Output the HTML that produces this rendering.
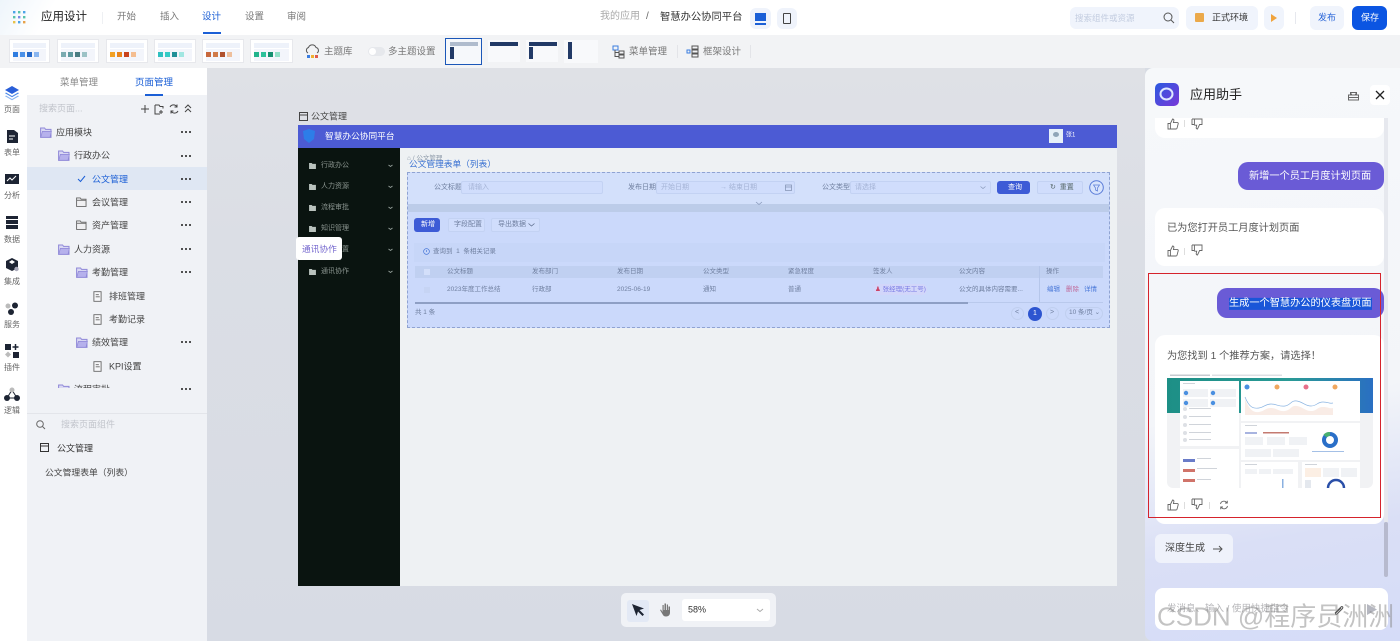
<!DOCTYPE html>
<html lang="zh"><head><meta charset="utf-8"><title>应用设计</title>
<style>
*{box-sizing:border-box}
html{background:#fff}
html,body{margin:0;padding:0}
body{width:1400px;height:641px;overflow:hidden;position:relative;background:#d8dce4;font-family:"Liberation Sans","Noto Sans CJK SC",sans-serif;color:#333;filter:blur(.35px)}
.t{position:absolute;white-space:nowrap;line-height:1.2;transform:translateY(-50%)}
.b{position:absolute}
svg{position:absolute;overflow:visible}
.c{transform:translate(-50%,-50%);text-align:center}
.tree{font-size:9px;color:#444}
.dots{position:absolute;left:181px;width:10px;height:2px;background:radial-gradient(circle at 1px 1px,#333 1px,transparent 1.1px) 0 0/4px 2px repeat-x}
.rail{font-size:8px;color:#666}
.card{position:absolute;top:39px;height:24px;background:#fff;border:1px solid #e7e8ec}
.card i{position:absolute;top:12px;width:5px;height:5px}
.card b{position:absolute;left:3px;right:3px;top:3px;height:5px;background:#eef2fa}
.card u{position:absolute;left:3px;right:3px;top:9px;height:12px;background:#f3f5fb;z-index:0}
.card i{z-index:1}
.menu{font-size:7px;color:#8a948f}
.f7{font-size:7px;color:#6f7f9f}
.ph{font-size:7px;color:#a5b4d6}
.box{position:absolute;border:1px solid #c3d2f3;background:#d0ddfc;border-radius:2px}
.bub{position:absolute;background:#6a5bd6;border-radius:10px}
.w{position:absolute;background:#fff;border-radius:10px}
.ms{font-size:10.2px;color:#555}
</style></head><body>

<svg width="0" height="0" style="position:absolute">
<defs>
<symbol id="fp" viewBox="0 0 12 11"><path d="M.6 1h4l1 1.4h5.4v8H.6z" fill="#d9d8f3" stroke="#8f88d8"/><path d="M.8 10.2 2.4 4.4h9L10 10.2z" fill="#b6b1ec" stroke="#8f88d8" stroke-width=".7"/></symbol>
<symbol id="fg" viewBox="0 0 12 11"><path d="M.6 1h4l1 1.4h5.4v8H.6z" fill="#f0f0f2" stroke="#666"/><path d="M.6 3.6h10.8" stroke="#666"/></symbol>
<symbol id="doc" viewBox="0 0 10 12"><path d="M1 .6h8v10.8H1z" fill="#f6f7f9" stroke="#666"/><path d="M3 4h3.5M3 6.3h4.5" stroke="#666"/></symbol>
<symbol id="up" viewBox="0 0 12 12"><path d="M1 5.5h2.4V11H1zM3.4 5.5 5.6 1c1.2 0 1.5 1 1.2 2L6.4 4.6H10.400c.7 0 1 .6.8 1.200L10 10.300c-.1.500-.5.700-1 .700H3.400" fill="none" stroke="#666" stroke-width=".9"/></symbol>
<symbol id="down" viewBox="0 0 12 12"><path d="M1 1h10v5.500H8.600L6.500 11c-1.200 0-1.500-1-1.200-2l.4-1.800H3.400" fill="none" stroke="#666" stroke-width=".9"/><path d="M3.400 1v6.200M1 1v5.500h2.400" fill="none" stroke="#666" stroke-width=".9"/></symbol>
<symbol id="fold" viewBox="0 0 8 7"><path d="M0 0h3l1 1h4v6H0z" fill="#b9c2bd"/></symbol>
</defs></svg>

<!-- top bar -->
<div class="b" style="left:0;top:0;width:1400px;height:35px;background:#fff"></div>
<div class="b" style="left:0;top:0;width:60px;height:35px;background:linear-gradient(120deg,#eef5fb,#fff 70%)"></div>
<svg style="left:13px;top:11px" width="14" height="14"><g fill="#4aa3e8"><rect x="0" y="0" width="2.400" height="2.400"/><rect x="5" y="0" width="2.400" height="2.400" fill="#58c2a8"/><rect x="10" y="0" width="2.400" height="2.400" fill="#4aa3e8"/><rect x="0" y="5" width="2.400" height="2.400" fill="#58c2a8"/><rect x="5" y="5" width="2.400" height="2.400" fill="#7a8be8"/><rect x="10" y="5" width="2.400" height="2.400" fill="#58c2a8"/><rect x="0" y="10" width="2.400" height="2.400" fill="#e8c24a"/><rect x="5" y="10" width="2.400" height="2.400" fill="#4aa3e8"/><rect x="10" y="10" width="2.400" height="2.400" fill="#e8a24a"/></g></svg>
<div class="t" style="left:41px;top:18px;font-size:11.500px;color:#222">应用设计</div>
<div class="b" style="left:102px;top:12px;width:1px;height:12px;background:#eef0f3"></div>
<div class="t" style="left:117px;top:17px;font-size:9.500px;color:#777">开始</div>
<div class="t" style="left:160px;top:17px;font-size:9.500px;color:#777">插入</div>
<div class="t" style="left:202px;top:17px;font-size:9.500px;color:#1b5fd6">设计</div>
<div class="t" style="left:245px;top:17px;font-size:9.500px;color:#777">设置</div>
<div class="t" style="left:287px;top:17px;font-size:9.500px;color:#777">审阅</div>
<div class="b" style="left:203px;top:32px;width:18px;height:2px;background:#1b5fd6"></div>
<div class="t" style="left:600px;top:17px;font-size:10px;color:#aaa">我的应用</div>
<div class="t" style="left:646px;top:17px;font-size:10px;color:#666">/</div>
<div class="t" style="left:660px;top:18px;font-size:10.300px;color:#333">智慧办公协同平台</div>
<div class="b" style="left:750px;top:8px;width:21px;height:21px;background:#eff3fb;border-radius:6px"></div>
<div class="b" style="left:755px;top:13px;width:11px;height:8px;background:#1b5fd6;border:1px solid #1b5fd6"></div>
<div class="b" style="left:755px;top:23px;width:11px;height:1.500px;background:#1b5fd6"></div>
<div class="b" style="left:777px;top:8px;width:20px;height:21px;background:#eff3fb;border-radius:6px"></div>
<div class="b" style="left:783px;top:13px;width:8px;height:11px;border:1px solid #444;border-radius:1px"></div>
<div class="b" style="left:1070px;top:7px;width:109px;height:22px;background:#f0f4fc;border-radius:6px"></div>
<div class="t" style="left:1075px;top:18px;font-size:8.500px;color:#c3cde0">搜索组件或资源</div>
<svg style="left:1163px;top:12px" width="12" height="12" fill="none" stroke="#555"><circle cx="5" cy="5" r="4"/><path d="M8 8l3 3"/></svg>
<div class="b" style="left:1186px;top:6px;width:72px;height:24px;background:#f0f4fc;border-radius:6px"></div>
<div class="b" style="left:1195px;top:13px;width:9px;height:9px;background:#eba94a;border-radius:1px"></div>
<div class="t" style="left:1212px;top:18px;font-size:9px;color:#333">正式环境</div>
<div class="b" style="left:1264px;top:6px;width:20px;height:24px;background:#f0f4fc;border-radius:6px"></div>
<svg style="left:1271px;top:14px" width="8" height="9"><path d="M0 0l6 4-6 4z" fill="#f0a33c"/></svg>
<div class="b" style="left:1295px;top:12px;width:1px;height:12px;background:#e6e8ee"></div>
<div class="b" style="left:1310px;top:6px;width:34px;height:24px;background:#f0f4fc;border-radius:6px"></div>
<div class="t" style="left:1318px;top:18px;font-size:9px;color:#2a66d8">发布</div>
<div class="b" style="left:1352px;top:6px;width:35px;height:24px;background:#0b55e2;border-radius:6px"></div>
<div class="t" style="left:1361px;top:18px;font-size:9px;color:#fff">保存</div>

<!-- toolbar -->
<div class="b" style="left:0;top:35px;width:1400px;height:33px;background:#f2f3f5"></div>
<div class="card" style="left:9px;width:41px"><b></b><u></u><i style="left:3px;background:#2f7de0"></i><i style="left:10px;background:#4a90e8"></i><i style="left:17px;background:#2467c8"></i><i style="left:24px;background:#8ab6f0"></i></div>
<div class="card" style="left:57px;width:42px"><b></b><u></u><i style="left:3px;background:#7aaab0"></i><i style="left:10px;background:#5f9aa0"></i><i style="left:17px;background:#4a7c82"></i><i style="left:24px;background:#9cc2c6"></i></div>
<div class="card" style="left:106px;width:42px"><b></b><u></u><i style="left:3px;background:#f2a024"></i><i style="left:10px;background:#e8841c"></i><i style="left:17px;background:#c9421c"></i><i style="left:24px;background:#f4bd90"></i></div>
<div class="card" style="left:154px;width:42px"><b></b><u></u><i style="left:3px;background:#2fc0c0"></i><i style="left:10px;background:#35cbc6"></i><i style="left:17px;background:#1f8f98"></i><i style="left:24px;background:#a0e6e2"></i></div>
<div class="card" style="left:202px;width:42px"><b></b><u></u><i style="left:3px;background:#c8683c"></i><i style="left:10px;background:#d07a48"></i><i style="left:17px;background:#b0502c"></i><i style="left:24px;background:#eebf9c"></i></div>
<div class="card" style="left:250px;width:43px"><b></b><u></u><i style="left:3px;background:#22b48c"></i><i style="left:10px;background:#2cc09a"></i><i style="left:17px;background:#159070"></i><i style="left:24px;background:#92e0c8"></i></div>
<svg style="left:305px;top:45px" width="15" height="15" fill="none"><path d="M3 8a3 3 0 0 1 .5-5.500A4 4 0 0 1 11 2.500 3 3 0 0 1 12 8" stroke="#555"/><rect x="2" y="10" width="3" height="3" fill="#3a7de0"/><rect x="6" y="10" width="3" height="3" fill="#f0b030"/><rect x="10" y="10" width="3" height="3" fill="#e05a4a"/></svg>
<div class="t" style="left:324px;top:52px;font-size:9.500px;color:#777">主题库</div>
<div class="b" style="left:368px;top:47px;width:17px;height:9px;background:#e6e8ec;border-radius:5px"></div>
<div class="b" style="left:369px;top:48px;width:7px;height:7px;background:#fff;border-radius:50%"></div>
<div class="t" style="left:388px;top:52px;font-size:9.500px;color:#777">多主题设置</div>
<div class="b" style="left:445px;top:38px;width:37px;height:27px;border:1.500px solid #1b57b8;background:#f6f8fb"></div>
<div class="b" style="left:450px;top:42px;width:28px;height:4px;background:#b0bccd"></div>
<div class="b" style="left:450px;top:47px;width:4px;height:12px;background:#223a66"></div>
<div class="b" style="left:488px;top:40px;width:32px;height:22px;background:#f8f9fb"></div>
<div class="b" style="left:490px;top:42px;width:28px;height:4px;background:#223a66"></div>
<div class="b" style="left:526px;top:40px;width:32px;height:22px;background:#f8f9fb"></div>
<div class="b" style="left:529px;top:42px;width:28px;height:4px;background:#223a66"></div>
<div class="b" style="left:529px;top:47px;width:4px;height:12px;background:#223a66"></div>
<div class="b" style="left:564px;top:40px;width:34px;height:23px;background:#f8f9fb"></div>
<div class="b" style="left:568px;top:42px;width:4px;height:17px;background:#223a66"></div>
<svg style="left:612px;top:45px" width="14" height="14" fill="none" stroke="#555"><rect x="1" y="1" width="5" height="4" stroke="#3a7de0"/><rect x="7" y="6" width="5" height="3"/><rect x="7" y="10" width="5" height="3"/><path d="M3 5v6.500h4M3 7.500h4"/></svg>
<div class="t" style="left:629px;top:52px;font-size:9.500px;color:#777">菜单管理</div>
<div class="b" style="left:677px;top:45px;width:1px;height:13px;background:#e3e4e8"></div>
<svg style="left:686px;top:45px" width="13" height="13" fill="none" stroke="#555"><rect x="6" y="1" width="6" height="3"/><rect x="6" y="5" width="6" height="3"/><rect x="6" y="9" width="6" height="3"/><rect x="1" y="5" width="3" height="3" stroke="#3a7de0"/></svg>
<div class="t" style="left:703px;top:52px;font-size:9.500px;color:#777">框架设计</div>
<div class="b" style="left:750px;top:45px;width:1px;height:13px;background:#e3e4e8"></div>

<!-- rail -->
<div class="b" style="left:0;top:68px;width:27px;height:573px;background:#fff"></div>
<svg style="left:5px;top:86px" width="14" height="14"><path d="M7 0l7 4-7 4-7-4z" fill="#2a5fd8"/><path d="M1 6.500l6 3.500 6-3.500 1 .8-7 4-7-4z" fill="#4a86e8"/><path d="M1 9.500l6 3.500 6-3.500 1 .8-7 4-7-4z" fill="#8ab4f0"/></svg>
<div class="t rail c" style="left:12px;top:110px">页面</div>
<svg style="left:7px;top:130px" width="11" height="13"><path d="M0 0h7l4 3v10H0z" fill="#1d2433"/><path d="M2 6h6M2 9h4" stroke="#fff"/></svg>
<div class="t rail c" style="left:12px;top:153px">表单</div>
<svg style="left:5px;top:174px" width="14" height="10"><rect width="14" height="10" fill="#1d2433"/><path d="M2 7l3-3 2 2 4-4" stroke="#fff" fill="none"/></svg>
<div class="t rail c" style="left:12px;top:196px">分析</div>
<svg style="left:6px;top:216px" width="12" height="13"><rect width="12" height="3" fill="#1d2433"/><rect y="4" width="12" height="4" fill="#1d2433"/><rect y="9" width="12" height="4" fill="#1d2433"/></svg>
<div class="t rail c" style="left:12px;top:240px">数据</div>
<svg style="left:6px;top:258px" width="13" height="14"><path d="M6 0l6 3v7l-6 3-6-3V3z" fill="#1d2433"/><path d="M3 4l3-2 3 2-3 2z" fill="#fff"/><circle cx="10.500" cy="11" r="2.200" fill="#aab"/></svg>
<div class="t rail c" style="left:12px;top:282px">集成</div>
<svg style="left:5px;top:302px" width="14" height="14"><circle cx="3" cy="4" r="2.500" fill="#bbb"/><circle cx="10" cy="3.500" r="3" fill="#1d2433"/><circle cx="6" cy="10" r="3" fill="#1d2433"/></svg>
<div class="t rail c" style="left:12px;top:325px">服务</div>
<svg style="left:5px;top:344px" width="14" height="14"><rect width="6" height="6" fill="#1d2433"/><path d="M10.500 0v6M7.500 3h6" stroke="#1d2433" stroke-width="1.500"/><path d="M3 7.500l3 3-3 3-3-3z" fill="#bbb"/><rect x="8" y="8" width="6" height="6" fill="#1d2433"/></svg>
<div class="t rail c" style="left:12px;top:368px">插件</div>
<svg style="left:4px;top:387px" width="16" height="14"><path d="M8 3l5 8H3z" fill="none" stroke="#1d2433"/><circle cx="8" cy="3" r="2.500" fill="#bbb"/><circle cx="3" cy="11" r="3" fill="#1d2433"/><circle cx="13" cy="11" r="3" fill="#1d2433"/></svg>
<div class="t rail c" style="left:12px;top:411px">逻辑</div>

<!-- left panel -->
<div class="b" style="left:27px;top:68px;width:180px;height:573px;background:#f0f2f6"></div>
<div class="b" style="left:27px;top:68px;width:180px;height:27px;background:#fff"></div>
<div class="t" style="left:60px;top:83px;font-size:9.500px;color:#888">菜单管理</div>
<div class="t" style="left:135px;top:83px;font-size:9.500px;color:#1b5fd6">页面管理</div>
<div class="b" style="left:145px;top:94px;width:18px;height:1.500px;background:#1b5fd6"></div>
<div class="t" style="left:39px;top:109px;font-size:9px;color:#c0c3ca">搜索页面...</div>
<svg style="left:140px;top:103px" width="56" height="12" fill="none" stroke="#444"><path d="M5 2v8M1 6h8"/><path d="M15 2h4l1 1.500h3v2M15 2v9h5M21 7v4M19 9h4"/><path d="M30 4a4 4 0 0 1 7 0M38 8a4 4 0 0 1-7 0M37 1.500V4h-2.500M31 10.500V8h2.500"/><path d="M45 5l3-3 3 3M45 9l3-3 3 3"/></svg>

<div class="b" style="left:27px;top:167px;width:180px;height:23px;background:#dfe7f3"></div>
<svg style="left:40px;top:127px" width="12" height="11"><use href="#fp"/></svg><div class="t tree" style="left:56px;top:133px">应用模块</div><div class="dots" style="top:131px"></div>
<svg style="left:58px;top:150px" width="12" height="11"><use href="#fp"/></svg><div class="t tree" style="left:74px;top:156px">行政办公</div><div class="dots" style="top:155px"></div>
<svg style="left:77px;top:175px" width="9" height="8" fill="none" stroke="#1b5fd6"><path d="M1 4l2.500 2.500L8 1"/></svg><div class="t tree" style="left:92px;top:180px;color:#1b5fd6">公文管理</div><div class="dots" style="top:178px"></div>
<svg style="left:76px;top:197px" width="11" height="10"><use href="#fg"/></svg><div class="t tree" style="left:92px;top:203px">会议管理</div><div class="dots" style="top:201px"></div>
<svg style="left:76px;top:220px" width="11" height="10"><use href="#fg"/></svg><div class="t tree" style="left:92px;top:226px">资产管理</div><div class="dots" style="top:224px"></div>
<svg style="left:58px;top:244px" width="12" height="11"><use href="#fp"/></svg><div class="t tree" style="left:74px;top:250px">人力资源</div><div class="dots" style="top:248px"></div>
<svg style="left:76px;top:267px" width="12" height="11"><use href="#fp"/></svg><div class="t tree" style="left:92px;top:273px">考勤管理</div><div class="dots" style="top:271px"></div>
<svg style="left:93px;top:291px" width="9" height="11"><use href="#doc"/></svg><div class="t tree" style="left:109px;top:297px">排班管理</div>
<svg style="left:93px;top:314px" width="9" height="11"><use href="#doc"/></svg><div class="t tree" style="left:109px;top:320px">考勤记录</div>
<svg style="left:76px;top:337px" width="12" height="11"><use href="#fp"/></svg><div class="t tree" style="left:92px;top:343px">绩效管理</div><div class="dots" style="top:341px"></div>
<svg style="left:93px;top:361px" width="9" height="11"><use href="#doc"/></svg><div class="t tree" style="left:109px;top:367px">KPI设置</div>
<div class="b" style="left:56px;top:384px;width:60px;height:4px;overflow:hidden"><svg style="left:2px;top:0" width="12" height="11"><use href="#fp"/></svg><div class="t tree" style="left:18px;top:6px">流程审批</div></div>
<div class="dots" style="top:388px"></div>
<div class="b" style="left:27px;top:413px;width:180px;height:1px;background:#e3e5ea"></div>
<svg style="left:36px;top:420px" width="10" height="10" fill="none" stroke="#666"><circle cx="4" cy="4" r="3.300"/><path d="M6.500 6.500L9 9"/></svg>
<div class="t" style="left:61px;top:425px;font-size:9px;color:#c2c5cc">搜索页面组件</div>
<svg style="left:40px;top:443px" width="10" height="10" fill="none" stroke="#333"><rect x=".5" y=".5" width="8" height="8"/><path d="M.5 3h8"/></svg>
<div class="t" style="left:57px;top:449px;font-size:9px;color:#333">公文管理</div>
<div class="t" style="left:45px;top:473px;font-size:8.800px;color:#444">公文管理表单（列表）</div>

<!-- canvas -->
<div class="b" style="left:207px;top:68px;width:938px;height:573px;background:linear-gradient(180deg,#dfe1e6 0%,#dbdee5 30%,#d7dbe4 100%)"></div>
<svg style="left:299px;top:112px" width="10" height="10" fill="none" stroke="#444"><rect x=".5" y=".5" width="8" height="8"/><path d="M.5 3h8"/></svg>
<div class="t" style="left:311px;top:117px;font-size:9px;color:#444">公文管理</div>
<div class="b" style="left:298px;top:125px;width:819px;height:461px;background:#eef1f3"></div>
<div class="b" style="left:298px;top:125px;width:819px;height:23px;background:#4c5bd4"></div>
<svg style="left:303px;top:129px" width="13" height="14"><path d="M0 2l6-2 6 2-1 8-5 4-5-4z" fill="#2d7de8"/></svg>
<div class="t" style="left:325px;top:136px;font-size:8.700px;color:#fff">智慧办公协同平台</div>
<div class="b" style="left:1049px;top:129px;width:14px;height:14px;background:#e6f0f8"></div>
<div class="b" style="left:1053px;top:132px;width:6px;height:5px;background:#8fa5b8;border-radius:50%"></div>
<div class="t" style="left:1066px;top:136px;font-size:6px;color:#fff">张1</div>

<div class="b" style="left:298px;top:148px;width:102px;height:438px;background:#0a1410"></div>
<svg style="left:309px;top:163px" width="7" height="6"><use href="#fold"/></svg><div class="t menu" style="left:321px;top:166px">行政办公</div>
<svg style="left:309px;top:184px" width="7" height="6"><use href="#fold"/></svg><div class="t menu" style="left:321px;top:187px">人力资源</div>
<svg style="left:309px;top:205px" width="7" height="6"><use href="#fold"/></svg><div class="t menu" style="left:321px;top:208px">流程审批</div>
<svg style="left:309px;top:226px" width="7" height="6"><use href="#fold"/></svg><div class="t menu" style="left:321px;top:229px">知识管理</div>
<svg style="left:309px;top:269px" width="7" height="6"><use href="#fold"/></svg><div class="t menu" style="left:321px;top:272px">通讯协作</div>
<svg style="left:388px;top:164px" width="5" height="115" fill="none" stroke="#9aa5a0" stroke-width=".8"><path d="M.5 1l2 1.500 2-1.500M.5 22l2 1.500 2-1.500M.5 43l2 1.500 2-1.500M.5 64l2 1.500 2-1.500M.5 85l2 1.500 2-1.500M.5 107l2 1.500 2-1.500"/></svg>
<div class="t menu" style="left:321px;top:250px">系统设置</div>
<div class="b" style="left:296px;top:237px;width:46px;height:23px;background:#fff;border-radius:3px"></div>
<div class="t" style="left:302px;top:249px;font-size:8.700px;color:#7668cf">通讯协作</div>

<div class="t" style="left:407px;top:159px;font-size:6.500px;color:#8d99a8">⌂ / 公文管理</div>
<div class="t" style="left:409px;top:164px;font-size:8.700px;color:#3a72d2">公文管理表单（列表）</div>

<div class="b" style="left:407px;top:172px;width:703px;height:156px;background:#cbd9fb;border:1px dashed #8fa3d2"></div>
<div class="b" style="left:408px;top:173px;width:701px;height:31px;background:#d3e0fb"></div>
<div class="b" style="left:408px;top:204px;width:701px;height:8px;background:#bccce9"></div>
<div class="t f7" style="left:434px;top:188px">公文标题</div>
<div class="box" style="left:461px;top:181px;width:142px;height:13px"></div><div class="t ph" style="left:468px;top:188px">请输入</div>
<div class="t f7" style="left:628px;top:188px">发布日期</div>
<div class="box" style="left:656px;top:181px;width:139px;height:13px"></div><div class="t ph" style="left:661px;top:188px">开始日期</div><div class="t ph" style="left:720px;top:188px">→ 结束日期</div>
<svg style="left:785px;top:184px" width="7" height="7" fill="none" stroke="#7f8fb0" stroke-width=".7"><rect x=".5" y="1" width="6" height="5.500"/><path d="M.5 3h6"/></svg>
<div class="t f7" style="left:822px;top:188px">公文类型</div>
<div class="box" style="left:850px;top:181px;width:141px;height:13px"></div><div class="t ph" style="left:855px;top:188px">请选择</div>
<svg style="left:980px;top:186px" width="6" height="4" fill="none" stroke="#8a9abb" stroke-width=".7"><path d="M.5.500l2.500 2 2.500-2"/></svg>
<div class="b" style="left:997px;top:181px;width:33px;height:13px;background:#3d5bd6;border-radius:3px"></div><div class="t" style="left:1008px;top:188px;font-size:7px;color:#fff">查询</div>
<div class="box" style="left:1037px;top:181px;width:46px;height:13px"></div><div class="t f7" style="left:1050px;top:188px;color:#566">↻ &nbsp;重置</div>
<svg style="left:1089px;top:180px" width="15" height="15" fill="none" stroke="#5a7cd8"><circle cx="7.500" cy="7.500" r="6.800" fill="#d8e4fc"/><path d="M4.500 5h6L8.500 8v3L6.500 10V8z" stroke-width=".7"/></svg>
<svg style="left:755px;top:201px" width="8" height="5" fill="none" stroke="#8a9abb" stroke-width=".8"><path d="M1 1l3 2.500L7 1"/></svg>

<div class="b" style="left:414px;top:218px;width:26px;height:14px;background:#3d5bd6;border-radius:3px"></div><div class="t" style="left:421px;top:225px;font-size:7px;color:#fff">新增</div>
<div class="box" style="left:448px;top:218px;width:37px;height:14px"></div><div class="t f7" style="left:454px;top:225px">字段配置</div>
<div class="box" style="left:491px;top:218px;width:49px;height:14px"></div><div class="t f7" style="left:498px;top:225px">导出数据</div>
<svg style="left:528px;top:223px" width="7" height="4" fill="none" stroke="#5f6f8f" stroke-width=".8"><path d="M.5.500L3.500 3l3-2.500"/></svg>
<div class="b" style="left:414px;top:243px;width:691px;height:19px;background:#c7d6f8"></div>
<svg style="left:423px;top:248px" width="7" height="7" fill="none" stroke="#4a78d8" stroke-width=".7"><circle cx="3.500" cy="3.500" r="2.900"/><path d="M3.500 2v2"/></svg>
<div class="t f7" style="left:433px;top:252px;font-size:6.500px">查询到 &nbsp;1 &nbsp;条相关记录</div>
<div class="b" style="left:415px;top:266px;width:688px;height:12px;background:#c0d0f1"></div>
<div class="b" style="left:424px;top:269px;width:6px;height:6px;background:#d3dffa"></div>
<div class="b" style="left:424px;top:287px;width:6px;height:6px;background:#c6d4f4"></div>
<div class="t f7" style="left:447px;top:272px;font-size:6.500px">公文标题</div>
<div class="t f7" style="left:532px;top:272px;font-size:6.500px">发布部门</div>
<div class="t f7" style="left:617px;top:272px;font-size:6.500px">发布日期</div>
<div class="t f7" style="left:703px;top:272px;font-size:6.500px">公文类型</div>
<div class="t f7" style="left:788px;top:272px;font-size:6.500px">紧急程度</div>
<div class="t f7" style="left:873px;top:272px;font-size:6.500px">签发人</div>
<div class="t f7" style="left:959px;top:272px;font-size:6.500px">公文内容</div>
<div class="t f7" style="left:1046px;top:272px;font-size:6.500px">操作</div>
<div class="t f7" style="left:447px;top:290px;font-size:6.500px">2023年度工作总结</div>
<div class="t f7" style="left:532px;top:290px;font-size:6.500px">行政部</div>
<div class="t f7" style="left:617px;top:290px;font-size:6.500px">2025-06-19</div>
<div class="t f7" style="left:703px;top:290px;font-size:6.500px">通知</div>
<div class="t f7" style="left:788px;top:290px;font-size:6.500px">普通</div>
<div class="b" style="left:873px;top:284px;width:54px;height:11px;background:#d2d6fa;border-radius:6px"></div>
<div class="t" style="left:875px;top:290px;font-size:6.500px;color:#7a7be4"><span style="color:#c46">♟</span> 张经理(无工号)</div>
<div class="t f7" style="left:959px;top:290px;font-size:6.500px">公文的具体内容需要...</div>
<div class="b" style="left:1039px;top:266px;width:1px;height:36px;background:#b5c6ea"></div>
<div class="t" style="left:1047px;top:290px;font-size:6.500px;color:#4a78d8">编辑</div>
<div class="t" style="left:1066px;top:290px;font-size:6.500px;color:#c06a9a">删除</div>
<div class="t" style="left:1084px;top:290px;font-size:6.500px;color:#4a78d8">详情</div>
<div class="b" style="left:415px;top:302px;width:688px;height:1px;background:#b9c9ec"></div>
<div class="b" style="left:415px;top:302px;width:553px;height:1.500px;background:#8e9fc4"></div>
<div class="t f7" style="left:415px;top:313px;font-size:6.500px">共 1 条</div>
<div class="b" style="left:1011px;top:307px;width:13px;height:13px;border:1px solid #c0cfef;border-radius:50%"></div><div class="t f7" style="left:1015px;top:313px">&lt;</div>
<div class="b" style="left:1028px;top:307px;width:14px;height:14px;background:#2d55d0;border-radius:50%"></div><div class="t" style="left:1033px;top:314px;font-size:7px;color:#fff">1</div>
<div class="b" style="left:1046px;top:307px;width:13px;height:13px;border:1px solid #c0cfef;border-radius:50%"></div><div class="t f7" style="left:1050px;top:313px">&gt;</div>
<div class="b" style="left:1065px;top:307px;width:38px;height:13px;border:1px solid #c0cfef;border-radius:7px"></div><div class="t f7" style="left:1069px;top:313px;font-size:6.500px">10 条/页 ⌄</div>

<!-- bottom toolbar -->
<div class="b" style="left:621px;top:593px;width:155px;height:34px;background:#f0f2f6;border-radius:5px"></div>
<div class="b" style="left:627px;top:600px;width:22px;height:22px;background:#e3e9f5;border-radius:3px"></div>
<svg style="left:632px;top:604px" width="13" height="13"><path d="M0 0l12 4.500-4.500 1.500 4.500 4.500-1.500 1.500L6 7.500 4.500 12z" fill="#1d2433"/></svg>
<svg style="left:659px;top:603px" width="12" height="14"><path d="M1 7l3 5c.5 1 1.500 1.500 3 1.500 3 0 4-2 4-4V3.500h-1.500V7H9V1.500H7.800V7H7V.500H5.500V7h-.8V2H3.500v7L2 6.500z" fill="#777"/></svg>
<div class="b" style="left:682px;top:599px;width:88px;height:22px;background:#fff;border-radius:3px"></div>
<div class="t" style="left:688px;top:610px;font-size:9px;color:#333">58%</div>
<svg style="left:756px;top:608px" width="8" height="5" fill="none" stroke="#aaa"><path d="M1 1l3 2.500L7 1"/></svg>

<!-- right panel -->
<div class="b" style="left:1145px;top:68px;width:255px;height:573px;background:linear-gradient(170deg,#f6f8fa 0%,#f3f5f9 58%,#dadff6 80%,#d5dcf8 100%);border-radius:8px 0 0 8px"></div>
<div class="b" style="left:1155px;top:83px;width:24px;height:23px;background:linear-gradient(135deg,#2a5ae0,#7a38d8);border-radius:5px"></div>
<svg style="left:1159px;top:87px" width="15" height="15" fill="none"><ellipse cx="7.500" cy="7" rx="6" ry="5.500" stroke="#dfe8ff" stroke-width="2"/></svg>
<div class="t" style="left:1190px;top:95px;font-size:13px;color:#222">应用助手</div>
<svg style="left:1348px;top:90px" width="11" height="11" fill="none" stroke="#666"><path d="M2.500 5V2.500h6V5M.5 5h10v5H.5zM.5 7.500h10M3 4h1M7 4h1"/></svg>
<div class="b" style="left:1370px;top:85px;width:20px;height:20px;background:#fff;border-radius:4px"></div>
<svg style="left:1375px;top:90px" width="10" height="10" fill="none" stroke="#222" stroke-width="1.300"><path d="M1 1l8 8M9 1l-8 8"/></svg>

<div class="b" style="left:1155px;top:118px;width:229px;height:20px;background:#fff;border-radius:0 0 10px 10px"></div>
<svg style="left:1167px;top:118px" width="12" height="12"><use href="#up"/></svg>
<div class="b" style="left:1184px;top:120px;width:1px;height:7px;background:#ddd"></div>
<svg style="left:1191px;top:118px" width="12" height="12"><use href="#down"/></svg>

<div class="bub" style="left:1238px;top:162px;width:146px;height:28px"></div>
<div class="t" style="left:1249px;top:177px;font-size:10.200px;color:#fff">新增一个员工月度计划页面</div>

<div class="w" style="left:1155px;top:208px;width:229px;height:58px"></div>
<div class="t ms" style="left:1167px;top:229px">已为您打开员工月度计划页面</div>
<svg style="left:1167px;top:245px" width="12" height="12"><use href="#up"/></svg>
<div class="b" style="left:1184px;top:248px;width:1px;height:7px;background:#ddd"></div>
<svg style="left:1191px;top:244px" width="12" height="12"><use href="#down"/></svg>

<div class="bub" style="left:1217px;top:288px;width:167px;height:30px"></div>
<div class="t" style="left:1229px;top:304px;font-size:10.200px;color:#fff;background:#1a56d8">生成一个智慧办公的仪表盘页面</div>

<div class="w" style="left:1155px;top:335px;width:229px;height:189px"></div>
<div class="t ms" style="left:1167px;top:357px">为您找到 1 个推荐方案，请选择！</div>

<svg style="left:1167px;top:373px" width="206" height="115" viewBox="0 0 206 115">
<defs><linearGradient id="tg" x1="0" x2="1" y1="0" y2="0"><stop offset="0" stop-color="#1d8f86"/><stop offset=".6" stop-color="#2a9a96"/><stop offset="1" stop-color="#2a6fc2"/></linearGradient></defs>
<clipPath id="cp"><rect width="206" height="115" rx="6"/></clipPath>
<g clip-path="url(#cp)">
<rect width="206" height="115" fill="#f1f2f4"/>
<rect width="206" height="5" fill="#fff"/>
<rect x="3" y="1.500" width="40" height="1.500" fill="#c6cbd0"/>
<rect x="45" y="1.500" width="70" height="1.500" fill="#dde0e4"/>
<rect y="5" width="206" height="35" fill="url(#tg)"/>
<rect x="13" y="8" width="59" height="65" fill="#fff"/>
<rect x="13" y="76" width="59" height="39" fill="#fff"/>
<rect x="74" y="8" width="119" height="40" fill="#fff"/>
<rect x="74" y="50" width="119" height="37" fill="#fff"/>
<rect x="74" y="89" width="57" height="26" fill="#fff"/>
<rect x="135" y="89" width="58" height="26" fill="#fff"/>
<g fill="#f0f2f5"><rect x="16" y="16" width="25" height="8"/><rect x="43" y="16" width="26" height="8"/><rect x="16" y="26" width="25" height="8"/><rect x="43" y="26" width="26" height="8"/></g>
<g fill="#4a8fe0"><circle cx="19" cy="20" r="2.200"/><circle cx="46" cy="20" r="2.200"/><circle cx="19" cy="30" r="2.200"/><circle cx="46" cy="30" r="2.200"/></g>
<g fill="#d0d4da"><rect x="16" y="10" width="12" height="1"/><rect x="22" y="35" width="22" height="1"/><rect x="22" y="43" width="22" height="1"/><rect x="22" y="51" width="22" height="1"/><rect x="22" y="59" width="22" height="1"/><rect x="22" y="66" width="22" height="1"/><rect x="30" y="85" width="14" height="1"/><rect x="30" y="95" width="20" height="1"/><rect x="30" y="106" width="14" height="1"/><rect x="78" y="52" width="12" height="1"/><rect x="78" y="91" width="12" height="1"/><rect x="138" y="91" width="12" height="1"/></g>
<g fill="#dde0e5"><circle cx="18" cy="36" r="2"/><circle cx="18" cy="44" r="2"/><circle cx="18" cy="52" r="2"/><circle cx="18" cy="60" r="2"/><circle cx="18" cy="67" r="2"/></g>
<rect x="16" y="86" width="12" height="3" fill="#6a7cc8"/><rect x="16" y="96" width="12" height="3" fill="#d0746a"/><rect x="16" y="106" width="12" height="3" fill="#d0746a"/>
<circle cx="80" cy="14" r="2.500" fill="#4a8fe0"/><circle cx="110" cy="14" r="2.500" fill="#f0a860"/><circle cx="139" cy="14" r="2.500" fill="#e8708a"/><circle cx="168" cy="14" r="2.500" fill="#f0a860"/>
<path d="M78 26c4 10 8 14 14 13s6-4 12-4 8 4 14 3 6-6 12-5 8 5 14 5 6-4 12-4 6 2 10 1v7H78z" fill="#f9ece6"/>
<path d="M78 24c4 10 8 12 14 11s6-4 12-4 8 3 14 2 6-6 12-5 8 5 14 5 6-4 12-4 6 2 10 1" fill="none" stroke="#8ab4e2" stroke-width=".7"/>
<rect x="96" y="59" width="26" height="1.500" fill="#c47a70"/><rect x="78" y="59" width="12" height="2" fill="#a8b4e0"/>
<g fill="#f0f2f5"><rect x="78" y="64" width="18" height="8"/><rect x="100" y="64" width="18" height="8"/><rect x="122" y="64" width="18" height="8"/><rect x="78" y="76" width="26" height="8"/><rect x="106" y="76" width="26" height="8"/></g>
<circle cx="163" cy="67" r="6" fill="none" stroke="#2a6fc8" stroke-width="4"/><path d="M158 63a6 6 0 0 1 5-2" stroke="#4ab070" stroke-width="4" fill="none"/>
<rect x="145" y="78" width="32" height="1" fill="#a4c0e6"/>
<g fill="#f0f2f5"><rect x="78" y="96" width="12" height="5"/><rect x="92" y="96" width="12" height="5"/><rect x="106" y="96" width="20" height="5"/></g>
<rect x="138" y="95" width="16" height="9" fill="#fcefe4"/><rect x="156" y="95" width="16" height="9" fill="#f0f2f5"/><rect x="174" y="95" width="16" height="9" fill="#f0f2f5"/>
<rect x="115" y="106" width="1.500" height="9" fill="#8ab0e0"/><path d="M161 115a8 8 0 0 1 16 0" stroke="#2a4fa8" stroke-width="2.500" fill="none"/><rect x="138" y="107" width="6" height="8" fill="#e4e8ee"/>
</g></svg>

<svg style="left:1167px;top:499px" width="12" height="12"><use href="#up"/></svg>
<div class="b" style="left:1184px;top:502px;width:1px;height:7px;background:#ddd"></div>
<svg style="left:1191px;top:498px" width="12" height="12"><use href="#down"/></svg>
<div class="b" style="left:1209px;top:502px;width:1px;height:7px;background:#ddd"></div>
<svg style="left:1219px;top:500px" width="10" height="10" fill="none" stroke="#666" stroke-width=".9"><path d="M1.500 4a3.500 3.500 0 0 1 6.500-1M8.500 6a3.500 3.500 0 0 1-6.500 1M8.300.800V3H6M1.700 9.200V7H4"/></svg>

<!-- red frame -->
<div class="b" style="left:1148px;top:273px;width:233px;height:245px;border:1px solid #d5232c"></div>

<!-- scrollbar -->
<div class="b" style="left:1384px;top:118px;width:4px;height:404px;background:#e6e8ee"></div>
<div class="b" style="left:1384px;top:522px;width:4px;height:55px;background:#b7bace;border-radius:2px"></div>

<div class="b" style="left:1155px;top:534px;width:78px;height:29px;background:#eff2fb;border-radius:6px"></div>
<div class="t" style="left:1165px;top:549px;font-size:10px;color:#444">深度生成</div>
<svg style="left:1213px;top:545px" width="10" height="8" fill="none" stroke="#555"><path d="M0 4h9M6 1l3 3-3 3"/></svg>

<div class="b" style="left:1155px;top:588px;width:233px;height:42px;background:#fff;border-radius:8px"></div>
<div class="t" style="left:1167px;top:609px;font-size:9.500px;color:#b5b5b8">发消息、输入 / 使用快捷指令</div>
<svg style="left:1333px;top:605px" width="11" height="11" fill="none" stroke="#555"><path d="M2 8l6-6c1-1 2.500 0 1.500 1.500L4 9c-.8.800-2 0-1.300-1L8 3"/></svg>
<svg style="left:1367px;top:604px" width="10" height="11"><path d="M0 0l10 5.500L0 11z" fill="#b5b7c0"/></svg>
<div class="t" style="left:1157px;top:617px;font-size:26px;color:rgba(135,135,135,.5)">CSDN @程序员洲洲</div>

</body></html>
